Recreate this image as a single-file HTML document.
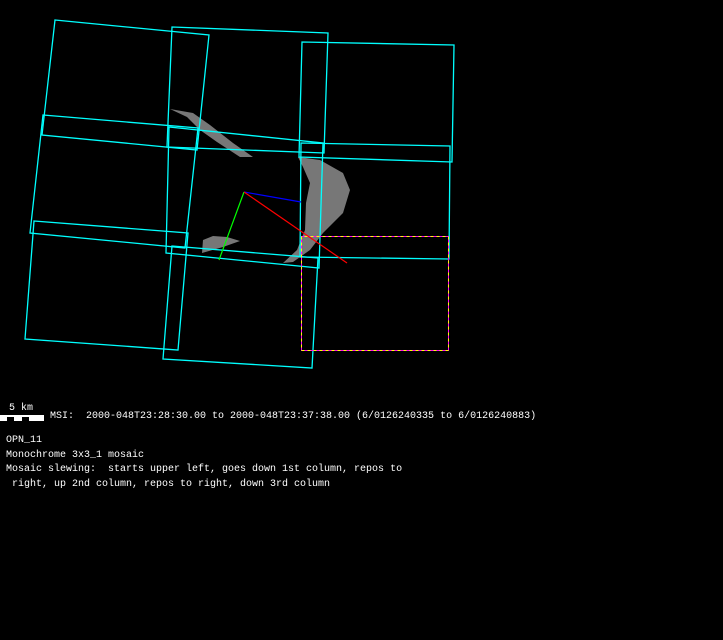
<!DOCTYPE html>
<html><head><style>
html,body{margin:0;padding:0;background:#000;width:723px;height:640px;overflow:hidden}
.t{position:absolute;color:#fff;font-family:"Liberation Mono","DejaVu Sans Mono",monospace;font-size:10px;white-space:pre;line-height:14.5px}
</style></head><body>
<svg width="723" height="640" style="position:absolute;left:0;top:0" xmlns="http://www.w3.org/2000/svg">
<g fill="#777" stroke="none">
<polygon points="298,157 320,160 343,173 350,190 343,213 323,233 310,250 293,262 283,263 297,250 305,230 306,203 310,183 303,167"/>
<polygon points="170,109 193,113 210,125 233,143 253,157 240,157 217,142 200,130 187,117"/>
<polygon points="203,240 213,236 227,237 240,241 223,247 202,253"/>
</g>
<g fill="none" stroke="#00ffff" stroke-width="1.3">
<polygon points="55,20 209,35 197,150 42,135"/>
<polygon points="43,115 198,128 185,248 30,233"/>
<polygon points="34,221 188,233 178,350 25,339"/>
<polygon points="172,27 328,33 324,153 167,147"/>
<polygon points="169,127 323,143 319,268 166,253"/>
<polygon points="172,246 318,258 312,368 163,359"/>
<polygon points="302,42 454,45 452,162 299,157"/>
<polygon points="301,143 450,146 449,259 300,257"/>
</g>
<rect x="301.5" y="236.5" width="147" height="114" fill="none" stroke="#ffff00" stroke-width="1"/>
<rect x="301.5" y="236.5" width="147" height="114" fill="none" stroke="#ff00ff" stroke-width="1" stroke-dasharray="3,3"/>
<line x1="244" y1="192" x2="301" y2="202" stroke="#0000ff" stroke-width="1.2"/>
<line x1="244" y1="192" x2="219" y2="260" stroke="#00ff00" stroke-width="1.2"/>
<line x1="244" y1="192" x2="347" y2="263" stroke="#ff0000" stroke-width="1.2"/>
<rect x="0" y="415" width="44" height="6" fill="#fff"/>
<rect x="7" y="417" width="7" height="4" fill="#000"/>
<rect x="22" y="417" width="7" height="4" fill="#000"/>
</svg>
<div class="t" style="left:9px;top:402px">5 km</div>
<div class="t" style="left:50px;top:410px">MSI:  2000-048T23:28:30.00 to 2000-048T23:37:38.00 (6/0126240335 to 6/0126240883)</div>
<div class="t" style="left:6px;top:434px">OPN_11
Monochrome 3x3_1 mosaic
Mosaic slewing:  starts upper left, goes down 1st column, repos to
 right, up 2nd column, repos to right, down 3rd column</div>
</body></html>
